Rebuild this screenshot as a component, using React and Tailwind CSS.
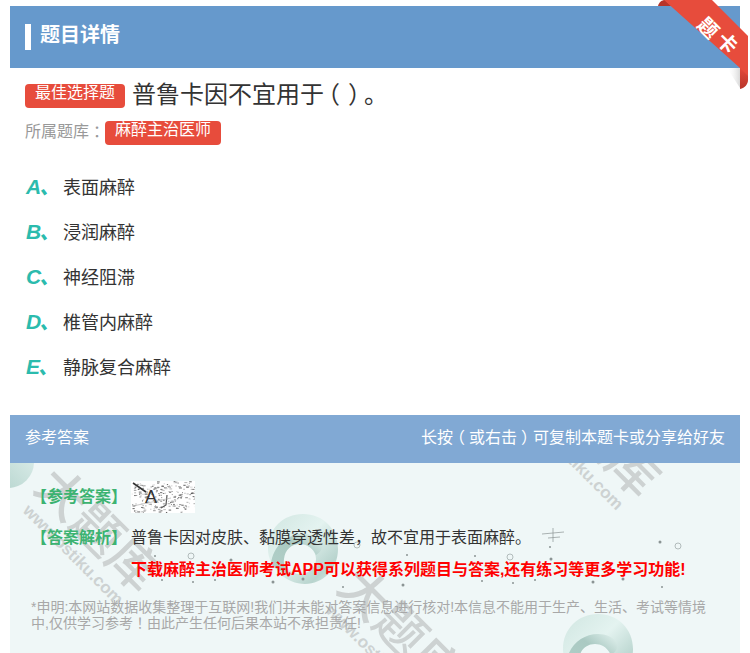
const options = [
  ["A", "表面麻醉"],
  ["B", "浸润麻醉"],
  ["C", "神经阻滞"],
  ["D", "椎管内麻醉"],
  ["E", "静脉复合麻醉"],
];

function Ring({ className }) {
  return (
    <svg className={className} viewBox="0 0 76 76" width="76" height="76">
      <defs>
        <linearGradient id="ringBase" x1="0" y1="0" x2="1" y2="1">
          <stop offset="0" stopColor="#d0e6e1" />
          <stop offset="0.45" stopColor="#e4f3f0" />
          <stop offset="0.8" stopColor="#b8d4ce" />
          <stop offset="1" stopColor="#e0efec" />
        </linearGradient>
        <linearGradient id="ringFold" x1="0" y1="1" x2="1" y2="0">
          <stop offset="0" stopColor="#b2d0c9" />
          <stop offset="0.6" stopColor="#aac9c2" />
          <stop offset="1" stopColor="#e4f3f0" />
        </linearGradient>
      </defs>
      <path
        fillRule="evenodd"
        fill="url(#ringBase)"
        d="M38 2C58 2 73 17 73 37C73 57 58 72 40 72C22 72 3 56 3 37C3 17 18 2 38 2ZM35 32C26 32 19 39 19 47C19 55 26 62 35 62C44 62 51 55 51 47C51 39 44 32 35 32Z"
      />
      <path
        fill="url(#ringFold)"
        d="M6 52C8 34 22 22 38 22C46 22 53 25 57 31C58 36 56 40 51 43C48 36 42 32 35 32C26 32 20 38 19 47C18 53 21 58 24 62C16 60 10 57 6 52Z"
      />
    </svg>
  );
}

function Mark({ className }) {
  return (
    <div className={`absolute h-[70px] w-[150px] rotate-45 select-none whitespace-nowrap text-[#cdd2d2] ${className}`}>
      <div className="text-[50px] font-medium leading-[50px]">大题库</div>
      <div className="pl-[9px] text-[17px] font-bold leading-[20px]">www.ostiku.com</div>
    </div>
  );
}

function Centered({ children, className = "w-[1em]" }) {
  return <span className={`inline-block text-center [font-feature-settings:'halt'] ${className}`}>{children}</span>;
}

const specks = [
  [660, 542, 1.5], [678, 546, 3], [550, 547, 1], [407, 555, 1], [475, 556, 1], [510, 557, 3], [551, 559, 1.5],
  [403, 585, 1.5], [482, 581, 1], [513, 583, 1], [535, 580, 1], [593, 582, 1.5], [623, 579, 1.5], [662, 587, 1],
  [155, 556, 1], [191, 556, 3], [231, 560, 1.5], [162, 580, 1], [193, 582, 1], [215, 580, 1], [273, 582, 1.5],
  [303, 579, 1.5], [343, 587, 1], [357, 545, 3],
];

function Specks() {
  return (
    <svg className="absolute left-0 top-0" width="730" height="190" viewBox="10 463 730 190">
      {specks.map(([x, y, r]) =>
        r === 3 ? (
          <circle key={`${x}-${y}`} cx={x} cy={y} r="3" fill="none" stroke="#9aa3a3" strokeWidth="0.7" />
        ) : (
          <circle key={`${x}-${y}`} cx={x} cy={y} r={r} fill="#8b9494" />
        )
      )}
      <path d="M542 534L564 532M548 538L560 537M553 528L553 542" stroke="#8b9494" strokeWidth="0.7" fill="none" />
    </svg>
  );
}

const noise = (() => {
  let s = 17;
  const next = () => {
    s = (s * 1103515245 + 12345) % 2147483648;
    return s / 2147483648;
  };
  return Array.from({ length: 230 }, () => ({
    x: next() * 64,
    y: next() * 32,
    w: 0.6 + next() * 2.4,
    g: Math.floor(90 + next() * 130),
  }));
})();

function Captcha() {
  return (
    <span className="relative flex h-[32px] w-[64px] items-center bg-white pl-[14px] text-[18px] text-[#333333]">
      <svg className="absolute left-0 top-0" width="64" height="32" viewBox="0 0 64 32">
        {noise.map((n, i) => (
          <rect key={i} x={n.x} y={n.y} width={n.w} height="1" fill={`rgb(${n.g},${n.g},${n.g})`} />
        ))}
        <path d="M2 2L15 11" stroke="#333333" strokeWidth="1.6" />
        <path d="M36 14L35 24L30 27" stroke="#555555" strokeWidth="1.2" fill="none" />
        <path d="M2 25L40 17" stroke="#b0b0b0" strokeWidth="0.7" />
      </svg>
      <span className="relative">A</span>
    </span>
  );
}

export default function App() {
  return (
    <div className="relative h-[653px] w-[750px] overflow-hidden bg-white [font-family:'Liberation_Sans','Noto_Sans_CJK_SC',sans-serif]">
      <div className="px-[10px] pt-[6px]">
        <div className="flex h-[62px] items-center bg-[#6699cc] pl-[15px]">
          <span className="h-[26px] w-[6px] bg-white" />
          <span className="mb-[4px] ml-[9px] text-[20px] font-bold leading-[26px] text-white">题目详情</span>
        </div>

        <div className="mt-[13px] flex items-start pl-[15px]">
          <span className="mt-[3px] flex h-[24px] w-[100px] justify-center rounded-[4px] bg-[#e74c3c] text-[16px] leading-[18px] text-white">最佳选择题</span>
          <span className="ml-[7px] flex text-[24px] leading-[28px] text-[#333333]">
            普鲁卡因不宜用于
            <Centered className="w-[20px]">（</Centered>
            <Centered className="w-[20px]">）</Centered>。
          </span>
        </div>

        <div className="mt-[12px] flex items-start pl-[15px]">
          <span className="text-[16px] leading-[22px] text-[#999999]">所属题库<Centered>：</Centered></span>
          <span className="flex h-[24px] w-[116px] justify-center rounded-[4px] bg-[#e74c3c] text-[16px] leading-[18px] text-white">麻醉主治医师</span>
        </div>

        <div className="mt-[21px] flex flex-col pl-[16px]">
          {options.map(([k, v]) => (
            <div key={k} className="flex h-[45px] items-center">
              <span className="mb-[4px] w-[37px] text-[21px] font-bold italic leading-[30px] text-[#2bbbad]">{k}<span className="ml-[-2px]">、</span></span>
              <span className="text-[18px] leading-[45px] text-[#333333]">{v}</span>
            </div>
          ))}
        </div>

        <div className="mt-[24px] flex h-[48px] items-center justify-between bg-[#81a9d4] px-[15px] pb-[3px] text-[16px] text-white">
          <span>参考答案</span>
          <span>长按<Centered>（</Centered>或右击<Centered>）</Centered>可复制本题卡或分享给好友</span>
        </div>

        <div className="relative h-[190px] overflow-hidden bg-[#eff7f7] pl-[21px]">
          <svg className="absolute left-0 top-0" width="26" height="26" viewBox="0 0 26 26">
            <defs>
              <linearGradient id="corner" x1="0" y1="1" x2="1" y2="0">
                <stop offset="0" stopColor="#aecfc8" />
                <stop offset="1" stopColor="#e4f3f0" />
              </linearGradient>
            </defs>
            <circle cx="-2" cy="-1" r="26" fill="url(#corner)" />
          </svg>
          <Ring className="absolute left-[255px] top-[49px]" />
          <Ring className="absolute left-[550px] top-[149px]" />
          <Mark className="left-[5px] top-[39px]" />
          <Mark className="left-[308px] top-[139px]" />
          <Mark className="left-[505px] top-[-56px]" />
          <Specks />

          <div className="relative pt-[18px]">
            <div className="flex items-center">
              <span className="w-[100px] text-[16px] font-bold leading-[30px] text-[#3cb371]">【参考答案】</span>
              <Captcha />
            </div>
            <div className="mt-[10px] flex items-center">
              <span className="w-[100px] text-[16px] font-bold leading-[30px] text-[#3cb371]">【答案解析】</span>
              <span className="text-[16px] leading-[30px] text-[#333333]">普鲁卡因对皮肤、黏膜穿透性差，故不宜用于表面麻醉。</span>
            </div>
            <div className="mt-[2px] pl-[100px] text-[16px] font-bold leading-[30px] text-[#ff0000]">下载麻醉主治医师考试APP可以获得系列题目与答案,还有练习等更多学习功能!</div>
            <div className="mt-[14px] w-[680px] text-[14px] leading-[16px] text-[#a8a8a8]">*申明:本网站数据收集整理于互联网!我们并未能对答案信息进行核对!本信息不能用于生产、生活、考试等情境中,仅供学习参考<Centered>！</Centered>由此产生任何后果本站不承担责任!</div>
          </div>
        </div>
      </div>

      <svg className="absolute right-0 top-0" width="100" height="92" viewBox="650 0 100 92">
        <defs>
          <linearGradient id="fold" x1="0" y1="0" x2="0" y2="1">
            <stop offset="0" stopColor="#e74c3c" />
            <stop offset="1" stopColor="#b8352a" />
          </linearGradient>
          <linearGradient id="shade" x1="1" y1="0" x2="0" y2="0">
            <stop offset="0" stopColor="#c8c8c8" stopOpacity="0.7" />
            <stop offset="1" stopColor="#ffffff" stopOpacity="0" />
          </linearGradient>
        </defs>
        <path d="M727 68L740 68L740 88Z" fill="url(#shade)" />
        <path d="M658 6C659 2 662 0 665 0L672 6Z" fill="#b8352a" />
        <path d="M740 66L740 89C745 88 748 84 748 80L748 66Z" fill="url(#fold)" />
        <path d="M664 0L712 0L748 36L748 76L740 68Z" fill="#e74c3c" />
      </svg>
      <div className="absolute left-[698px] top-[16px] rotate-45 text-[20px] font-bold leading-[24px] text-white">题</div>
      <div className="absolute left-[717px] top-[31px] rotate-45 text-[20px] font-bold leading-[24px] text-white">卡</div>
    </div>
  );
}
